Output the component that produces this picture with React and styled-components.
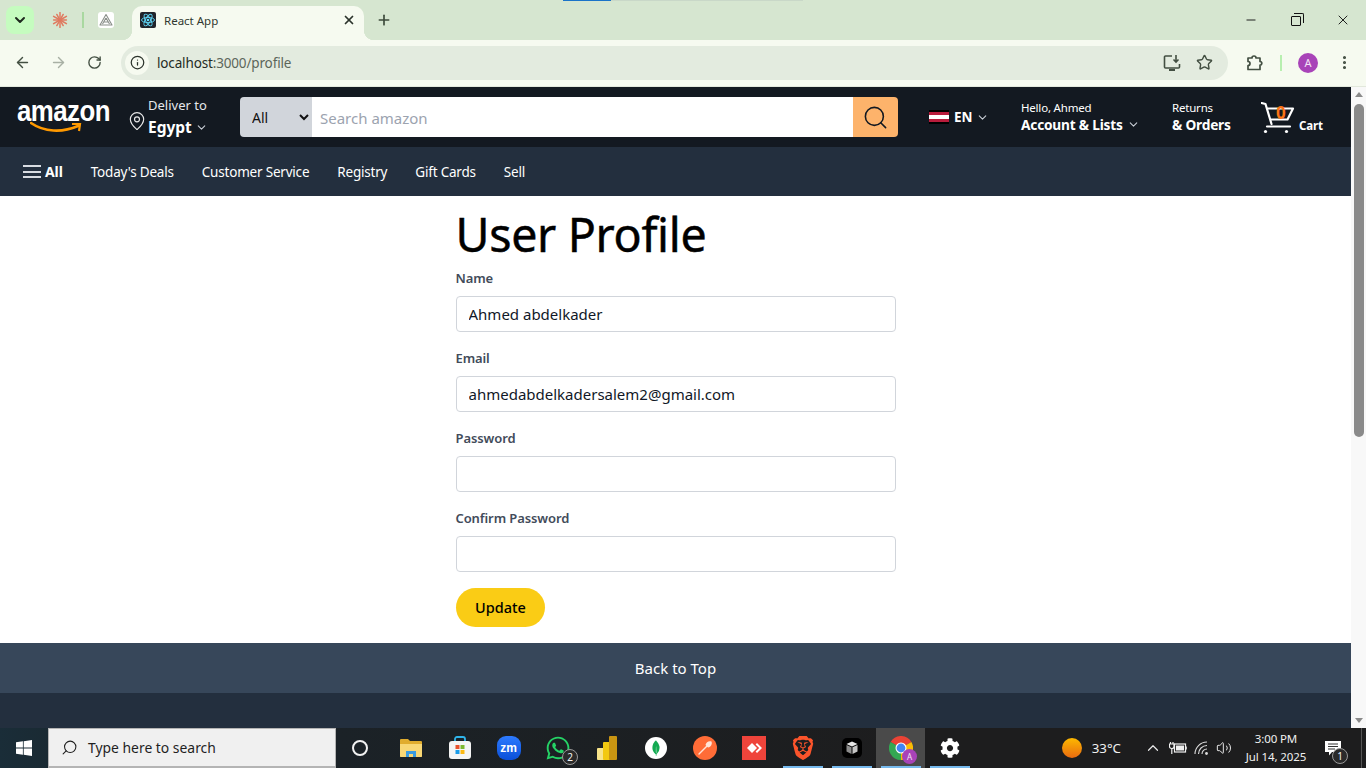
import React from "react";
import styled, { createGlobalStyle } from "styled-components";
import {
  ArrowLeft, ArrowRight, RotateCw, Info, Star, MoreVertical, X, Plus, Minus,
  ChevronDown, ChevronUp, MapPin, Search, Volume2
} from "lucide-react";
import { FaWhatsapp, FaCog } from "react-icons/fa";
import { SiBrave, SiMongodb } from "react-icons/si";

const UI_FONT = `"Noto Sans", "Open Sans", "Liberation Sans", sans-serif`;

const GlobalStyle = createGlobalStyle`
  html, body { margin: 0; padding: 0; height: 100%; overflow: hidden; background: #fff; }
  body { font-family: ${UI_FONT}; }
  #root { height: 768px; }
  * { box-sizing: border-box; }
`;

const Screen = styled.div`
  width: 1366px;
  height: 768px;
  display: flex;
  flex-direction: column;
  overflow: hidden;
`;

/* browser chrome */
const TabStrip = styled.div`
  position: relative;
  height: 40px;
  flex: none;
  background: #d6e6d0;
  display: flex;
  align-items: center;
  padding-left: 6px;
  &::before {
    content: "";
    position: absolute;
    top: 0;
    left: 563px;
    width: 240px;
    height: 1px;
    background: linear-gradient(to right, #1a73c8 20%, #c9d8c8 20%);
  }
`;
const TabMenuButton = styled.div`
  width: 28px;
  height: 28px;
  border-radius: 8px;
  background: #c5fcbf;
  color: #1f2a1f;
  display: flex;
  align-items: center;
  justify-content: center;
`;
const PinnedIcon = styled.div`
  width: 16px;
  height: 16px;
  margin-left: ${({ $ml }) => $ml}px;
  display: flex;
`;
const PinnedDivider = styled.div`
  width: 2px;
  height: 16px;
  margin-left: 14px;
  background: #a9d8a0;
`;
const ActiveTab = styled.div`
  position: relative;
  align-self: flex-end;
  width: 232px;
  height: 34px;
  margin-left: 18px;
  padding: 0 8px 6px;
  background: #f6faf0;
  border-radius: 10px 10px 0 0;
  display: flex;
  align-items: center;
  color: #30382f;
  font-size: 11.5px;
  &::before, &::after {
    content: "";
    position: absolute;
    bottom: 0;
    width: 10px;
    height: 10px;
  }
  &::before { left: -10px; background: radial-gradient(circle at 0 0, #d6e6d0 10px, #f6faf0 10.5px); }
  &::after { right: -10px; background: radial-gradient(circle at 100% 0, #d6e6d0 10px, #f6faf0 10.5px); }
`;
const Favicon = styled.div`
  width: 16px;
  height: 16px;
  border-radius: 2px;
  background: #20232a;
  display: flex;
  margin-right: 8px;
`;
const TabTitle = styled.span`
  flex: 1;
`;
const NewTab = styled.div`
  margin-left: 12px;
  color: #3c4a3a;
  display: flex;
`;
const WindowControls = styled.div`
  margin-left: auto;
  display: flex;
`;
const WindowButton = styled.div`
  width: 46px;
  height: 40px;
  color: #111;
  display: flex;
  align-items: center;
  justify-content: center;
`;
const RestoreGlyph = styled.div`
  position: relative;
  width: 10px;
  height: 10px;
  margin: 2px 0 0 -2px;
  border: 1px solid #111;
  border-radius: 1px;
  &::after {
    content: "";
    position: absolute;
    top: -4px;
    right: -4px;
    width: 9px;
    height: 9px;
    border-top: 1px solid #111;
    border-right: 1px solid #111;
    border-top-right-radius: 2px;
  }
`;
const Toolbar = styled.div`
  height: 47px;
  flex: none;
  background: #f6faf0;
  border-bottom: 1px solid #e2e8dc;
  display: flex;
  align-items: center;
  padding: 0 4px 1px;
`;
const ToolButton = styled.div`
  width: 36px;
  height: 36px;
  color: ${({ $muted }) => ($muted ? "#a8b0a4" : "#434f42")};
  display: flex;
  align-items: center;
  justify-content: center;
`;
const AddressBar = styled.div`
  width: 1107px;
  height: 34px;
  margin: 0 9px;
  border-radius: 17px;
  background: #e3ebdf;
  display: flex;
  align-items: center;
  padding: 0 8px 0 4px;
`;
const SiteInfo = styled.div`
  width: 24px;
  height: 24px;
  border-radius: 50%;
  background: #f6faf0;
  color: #2b332b;
  display: flex;
  align-items: center;
  justify-content: center;
  margin-right: 8px;
`;
const UrlText = styled.div`
  flex: 1;
  font-size: 13.5px;
  letter-spacing: -0.15px;
  color: #5c665a;
  b { font-weight: 400; color: #252b25; }
`;
const AddressAction = styled.div`
  width: 32px;
  height: 32px;
  color: #434f42;
  display: flex;
  align-items: center;
  justify-content: center;
`;
const ToolDivider = styled.div`
  width: 2px;
  height: 16px;
  margin: 0 8px 0 7px;
  background: #b8efb0;
`;
const Avatar = styled.div`
  width: 20px;
  height: 20px;
  border-radius: 50%;
  background: #a843b8;
  color: #f3e3f6;
  font-size: 11px;
  display: flex;
  align-items: center;
  justify-content: center;
`;

/* page viewport */
const Viewport = styled.div`
  flex: 1;
  min-height: 0;
  display: flex;
`;
const Page = styled.div`
  flex: 1;
  min-width: 0;
  display: flex;
  flex-direction: column;
`;
const Scrollbar = styled.div`
  width: 15px;
  background: #f8f8f8;
  display: flex;
  flex-direction: column;
  align-items: center;
  padding: 5px 0;
`;
const ScrollArrow = styled.div`
  width: 0;
  height: 0;
  border-left: 4.5px solid transparent;
  border-right: 4.5px solid transparent;
  border-${({ $down }) => ($down ? "top" : "bottom")}: 5px solid #8a8a8a;
`;
const ScrollTrack = styled.div`
  flex: 1;
  align-self: stretch;
  padding: 7px 2px 0 3px;
`;
const ScrollThumb = styled.div`
  height: 333px;
  background: #8a8a8a;
  border-radius: 5px;
`;

const Header = styled.header`
  height: 60px;
  flex: none;
  background: #131921;
  color: #fff;
  display: flex;
  align-items: center;
  padding-left: 17px;
`;
const Logo = styled.div`
  position: relative;
  width: 94px;
  height: 44px;
`;
const LogoText = styled.span`
  display: block;
  font-family: "Liberation Sans", sans-serif;
  font-weight: 700;
  font-size: 30px;
  letter-spacing: -0.6px;
  line-height: 31px;
  color: #fff;
  transform: scaleX(0.86);
  transform-origin: left center;
`;
const LogoSmile = styled.svg`
  position: absolute;
  left: 13px;
  top: 25px;
`;
const DeliverPin = styled.div`
  margin-left: 16px;
  margin-top: 8px;
  width: 20px;
  display: flex;
  color: #e8e8e8;
`;
const Deliver = styled.div`
  width: 92px;
  margin-left: 1px;
  display: flex;
  flex-direction: column;
  gap: 2px;
`;
const DeliverTop = styled.span`
  font-size: 13px;
  line-height: 19px;
  margin-top: -1px;
  color: #e5e7eb;
`;
const DeliverBottom = styled.span`
  font-size: 15.5px;
  line-height: 21px;
  font-weight: 700;
  display: flex;
  align-items: center;
  gap: 3px;
`;
const SearchForm = styled.div`
  width: 658px;
  height: 40px;
  display: flex;
  border-radius: 4px;
  overflow: hidden;
`;
const CategorySelect = styled.select`
  width: 72px;
  border: 0;
  outline: 0;
  padding-left: 8px;
  background: #d1d5db;
  color: #111;
  font: 400 14px ${UI_FONT};
`;
const SearchInput = styled.input`
  flex: 1;
  min-width: 0;
  border: 0;
  outline: 0;
  padding: 2px 8px 0;
  font: 400 15px ${UI_FONT};
  &::placeholder { color: #9ca3af; opacity: 1; }
`;
const SearchButton = styled.div`
  width: 45px;
  background: #fdb36b;
  color: #131921;
  display: flex;
  align-items: center;
  justify-content: center;
`;
const Language = styled.div`
  margin-left: 31px;
  width: 92px;
  display: flex;
  align-items: center;
  font-size: 13.5px;
  font-weight: 700;
`;
const Flag = styled.div`
  width: 20px;
  height: 14px;
  margin-right: 5px;
  background: linear-gradient(to bottom, #000 0 2px, #b91c3c 2px 5px, #fff 5px 9px, #b91c3c 9px 12px, #000 12px);
`;
const HeaderLink = styled.div`
  width: ${({ $w }) => $w}px;
  margin-top: -2px;
  display: flex;
  flex-direction: column;
`;
const LinkTop = styled.span`
  font-size: 11.5px;
  line-height: 17px;
  letter-spacing: -0.2px;
`;
const LinkBottom = styled.span`
  font-size: 13.7px;
  line-height: 18px;
  font-weight: 700;
  letter-spacing: -0.2px;
  display: flex;
  align-items: center;
  gap: 4px;
  white-space: nowrap;
`;
const CaretIcon = styled(ChevronDown)`
  color: #c9ced6;
  flex: none;
  margin-left: ${({ $ml }) => $ml || 0}px;
`;
const Cart = styled.div`
  position: relative;
  display: flex;
  align-items: flex-end;
  height: 34px;
  margin-top: 2px;
`;
const CartCount = styled.span`
  position: absolute;
  left: 15px;
  top: 3px;
  font-size: 17px;
  line-height: 18px;
  font-weight: 700;
  color: #f97316;
`;
const CartLabel = styled.span`
  font-size: 11.5px;
  line-height: 16px;
  font-weight: 700;
  margin-left: 2px;
  margin-bottom: 1px;
  letter-spacing: -0.1px;
`;

const Nav = styled.nav`
  height: 49px;
  flex: none;
  background: #232f3e;
  color: #fff;
  display: flex;
  align-items: center;
  gap: 28px;
  padding-left: 23px;
  font-size: 13.5px;
`;
const AllButton = styled.div`
  display: flex;
  align-items: center;
  gap: 4px;
  font-weight: 700;
  font-size: 14px;
  letter-spacing: -0.1px;
`;
const Hamburger = styled.div`
  width: 18px;
  height: 13px;
  border-top: 2px solid #d8dce2;
  border-bottom: 2px solid #d8dce2;
  position: relative;
  &::after {
    content: "";
    position: absolute;
    left: 0;
    right: 0;
    top: 3.5px;
    height: 2px;
    background: #d8dce2;
  }
`;
const NavLink = styled.a`
  letter-spacing: -0.2px;
  white-space: nowrap;
`;

const Main = styled.main`
  flex: 1;
  min-height: 0;
  background: #fff;
`;
const ProfileForm = styled.form`
  width: 440px;
  margin: 0 auto;
  padding-top: 10px;
`;
const Title = styled.h1`
  margin: 0 0 6px;
  font-size: 46.5px;
  line-height: 56px;
  font-weight: 400;
  color: #000;
  letter-spacing: -0.3px;
  -webkit-text-stroke: 0.5px #000;
`;
const FieldGroup = styled.div`
  margin-bottom: 16px;
`;
const FieldLabel = styled.label`
  display: block;
  height: 20px;
  margin-bottom: 8px;
  font-size: 13px;
  line-height: 20px;
  font-weight: 600;
  letter-spacing: -0.1px;
  color: #424b5a;
`;
const TextInput = styled.input`
  display: block;
  width: 100%;
  height: 36px;
  padding: 0 12px;
  border: 1px solid #d1d5db;
  border-radius: 4px;
  outline: 0;
  background: #fff;
  color: #111827;
  font: 400 15px ${UI_FONT};
`;
const UpdateButton = styled.button`
  display: block;
  width: 89px;
  height: 39px;
  padding: 0 0 2px 1px;
  border: 0;
  border-radius: 20px;
  background: #facc15;
  color: #000;
  font: 500 14.5px ${UI_FONT};
`;
const BackToTop = styled.div`
  height: 50px;
  flex: none;
  background: #37475a;
  color: #fff;
  font-size: 15px;
  display: flex;
  align-items: center;
  justify-content: center;
`;
const FooterFill = styled.div`
  height: 35px;
  flex: none;
  background: #232f3e;
`;

/* windows taskbar */
const Taskbar = styled.div`
  height: 40px;
  flex: none;
  background: linear-gradient(to right, #1a2d38 0, #1a2a33 48px, #1b2227 340px, #1d1d1e 900px);
  display: flex;
  align-items: center;
  color: #fff;
`;
const StartButton = styled.div`
  width: 48px;
  display: flex;
  justify-content: center;
`;
const TaskSearch = styled.div`
  width: 288px;
  height: 40px;
  background: #f0f0f0;
  border: 1px solid #b4b4b4;
  border-bottom-width: 2px;
  display: flex;
  align-items: center;
  gap: 10px;
  padding-left: 12px;
  color: #1f1f1f;
  font-size: 13.9px;
`;
const MirroredSearch = styled(Search)`
  transform: scaleX(-1);
`;
const TaskIcons = styled.div`
  display: flex;
  height: 40px;
  margin-left: 1px;
`;
const TaskSlot = styled.div`
  position: relative;
  width: 49px;
  height: 40px;
  display: flex;
  align-items: center;
  justify-content: center;
  background: ${({ $active }) => ($active ? "#4a4a4a" : "transparent")};
  ${({ $open }) =>
    $open
      ? `&::after {
    content: "";
    position: absolute;
    left: 5px;
    right: 4px;
    bottom: 0;
    height: 2px;
    background: #76b9ed;
  }`
      : ""}
`;
const CortanaRing = styled.div`
  width: 16px;
  height: 16px;
  margin-right: 3px;
  border-radius: 50%;
  border: 2.5px solid #f2f2f2;
`;
const ZoomTile = styled.div`
  width: 24px;
  height: 24px;
  border-radius: 9px;
  background: linear-gradient(#2d7bff, #0b4fd8);
  color: #fff;
  font: 700 12px "Liberation Sans", sans-serif;
  display: flex;
  align-items: center;
  justify-content: center;
`;
const CountBadge = styled.span`
  position: absolute;
  right: ${({ $r }) => $r}px;
  bottom: ${({ $b }) => $b}px;
  width: 16px;
  height: 16px;
  border-radius: 50%;
  border: 1px solid #9a9a9a;
  background: #2a2a2a;
  color: #f4f4f4;
  font-size: 10px;
  line-height: 14px;
  text-align: center;
`;
const WhatsappIcon = styled(FaWhatsapp)`
  color: #25d366;
`;
const MongoTile = styled.div`
  width: 22px;
  height: 22px;
  border-radius: 50%;
  background: #fff;
  color: #13aa52;
  display: flex;
  align-items: center;
  justify-content: center;
`;
const BraveIcon = styled(SiBrave)`
  color: #fb542b;
`;
const ProfileDot = styled.span`
  position: absolute;
  right: 8px;
  bottom: 4px;
  width: 15px;
  height: 15px;
  border-radius: 50%;
  background: #a843b8;
  color: #f3e3f6;
  font-size: 8px;
  line-height: 15px;
  text-align: center;
`;
const SystemTray = styled.div`
  margin-left: auto;
  display: flex;
  align-items: center;
  height: 40px;
  color: #f0f0f0;
`;
const WeatherSun = styled.div`
  width: 20px;
  height: 20px;
  border-radius: 50%;
  background: linear-gradient(#fdb900, #e86a10);
`;
const Temperature = styled.span`
  margin: 0 20px 0 10px;
  font-size: 13.3px;
`;
const TrayIcon = styled.div`
  width: ${({ $w }) => $w}px;
  display: flex;
  justify-content: center;
  color: #e8e8e8;
`;
const Clock = styled.div`
  width: 76px;
  margin-left: 4px;
  text-align: center;
  font-size: 11.5px;
  line-height: 18px;
  letter-spacing: -0.12px;
`;
const Notify = styled.div`
  position: relative;
  width: 44px;
  height: 40px;
  margin-left: 8px;
  display: flex;
  align-items: center;
  justify-content: center;
  padding-right: 22px;
  &::after {
    content: "";
    position: absolute;
    right: 4px;
    top: 0;
    bottom: 0;
    width: 1px;
    background: #555;
  }
`;

const ReactGlyph = () => (
  <svg width="16" height="16" viewBox="0 0 16 16" fill="none" stroke="#61dafb" strokeWidth="0.9">
    <ellipse cx="8" cy="8" rx="6.5" ry="2.6" />
    <ellipse cx="8" cy="8" rx="6.5" ry="2.6" transform="rotate(60 8 8)" />
    <ellipse cx="8" cy="8" rx="6.5" ry="2.6" transform="rotate(120 8 8)" />
    <circle cx="8" cy="8" r="1.3" fill="#61dafb" stroke="none" />
  </svg>
);

const ClaudeGlyph = () => (
  <svg width="16" height="16" viewBox="0 0 16 16" stroke="#e07a5f" strokeWidth="1.5" strokeLinecap="round">
    {[0, 30, 60, 90, 120, 150, 180, 210, 240, 270, 300, 330].map(a => (
      <line key={a} x1="8" y1="8" x2="8" y2={a % 60 === 0 ? 0.6 : 1.6} transform={`rotate(${a} 8 8)`} />
    ))}
  </svg>
);

const PinnedGlyph = () => (
  <svg width="16" height="16" viewBox="0 0 16 16" fill="none">
    <rect width="16" height="16" rx="3" fill="#fff" />
    <path d="M8 2.5 L14 13 H2 Z M8 6 L11.5 12 M8 6 L4.5 12 M5.5 10 H10.5" stroke="#8a8f8a" strokeWidth="1.1" strokeLinejoin="round" />
  </svg>
);

const InstallIcon = () => (
  <svg width="18" height="18" viewBox="0 0 18 18" fill="none" stroke="currentColor" strokeWidth="1.6">
    <path d="M9 2 H2.5 a1 1 0 0 0-1 1 v10 a1 1 0 0 0 1 1 h13 a1 1 0 0 0 1-1 V10" />
    <path d="M13 1 V8 M10.5 5.5 L13 8 L15.5 5.5" />
    <path d="M6 16 H12" strokeWidth="2" />
  </svg>
);

const ExtensionIcon = () => (
  <svg width="18" height="18" viewBox="0 0 18 18" fill="none" stroke="currentColor" strokeWidth="1.7" strokeLinejoin="round">
    <path d="M2 4 H6 a2 2 0 0 1 4 0 H14 V7.5 a1.8 1.8 0 0 1 0 3.6 V15.5 H2 V11.5 a2 2 0 0 0 0-4 Z" />
  </svg>
);

const WindowsLogo = () => (
  <svg width="16" height="16" viewBox="0 0 16 16" fill="#fff">
    <path d="M0 2.3 L6.9 1.3 V7.6 H0 Z M7.7 1.2 L16 0 V7.6 H7.7 Z M0 8.4 H6.9 V14.7 L0 13.7 Z M7.7 8.4 H16 V16 L7.7 14.8 Z" />
  </svg>
);

const FolderIcon = () => (
  <svg width="22" height="20" viewBox="0 0 22 20">
    <path d="M0 2 a1 1 0 0 1 1-1 h7 l2 2 h11 a1 1 0 0 1 1 1 v14 a1 1 0 0 1-1 1 H1 a1 1 0 0 1-1-1 Z" fill="#e0ac2e" />
    <path d="M0 6 h22 v12 a1 1 0 0 1-1 1 H1 a1 1 0 0 1-1-1 Z" fill="#f8d775" />
    <path d="M6 19 v-6 h10 v6 h-3 v-3 h-4 v3 Z" fill="#3a9be0" />
  </svg>
);

const StoreIcon = () => (
  <svg width="24" height="24" viewBox="0 0 24 24">
    <path d="M7 6 V3 a2 2 0 0 1 2-2 h6 a2 2 0 0 1 2 2 v3" fill="none" stroke="#2fb4ea" strokeWidth="1.8" />
    <rect x="1" y="5" width="22" height="18" rx="3" fill="#f4f4f4" />
    <rect x="7.5" y="9" width="4" height="4" fill="#e8502a" />
    <rect x="12.5" y="9" width="4" height="4" fill="#7cb82f" />
    <rect x="7.5" y="14" width="4" height="4" fill="#1a9be8" />
    <rect x="12.5" y="14" width="4" height="4" fill="#fcb913" />
  </svg>
);

const PowerBiIcon = () => (
  <svg width="20" height="24" viewBox="0 0 20 24">
    <rect x="0" y="12" width="8" height="12" rx="1" fill="#f7e38a" />
    <rect x="6" y="6" width="8" height="18" rx="1" fill="#f2c811" />
    <rect x="12" y="0" width="8" height="24" rx="1" fill="#c99512" />
  </svg>
);

const PostmanIcon = () => (
  <svg width="24" height="24" viewBox="0 0 24 24">
    <circle cx="12" cy="12" r="12" fill="#ff6c37" />
    <path d="M6 18 L15 9" stroke="#ffe4d8" strokeWidth="1.4" strokeLinecap="round" />
    <path d="M12.5 9 C13 6 16 4.5 18.5 5.5 C19.5 8 18 11 15 11.5 Z" fill="#ffe4d8" />
  </svg>
);

const AnydeskIcon = () => (
  <svg width="24" height="24" viewBox="0 0 24 24">
    <rect width="24" height="24" fill="#ef443b" />
    <path d="M10 7 L15 12 L10 17 L5 12 Z" fill="#fff" />
    <path d="M15 7 L20 12 L15 17 L13.6 15.6 L17.2 12 L13.6 8.4 Z" fill="#fff" />
  </svg>
);

const BoxIcon = () => (
  <svg width="20" height="20" viewBox="0 0 20 20">
    <rect width="20" height="20" rx="5" fill="#000" />
    <path d="M10 3.5 L15.5 6 L10 8.5 L4.5 6 Z" fill="#e6e6e6" />
    <path d="M4.5 7 L9.5 9.3 V16 L4.5 13.5 Z" fill="#8c8c8c" />
    <path d="M15.5 7 L10.5 9.3 V16 L15.5 13.5 Z" fill="#c4c4c4" />
  </svg>
);

const ChromeIcon = () => (
  <svg width="24" height="24" viewBox="0 0 24 24">
    <path d="M12 12 L1.6 6 A12 12 0 0 1 22.4 6 Z" fill="#ea4335" />
    <path d="M12 12 L22.4 6 A12 12 0 0 1 12 24 Z" fill="#fbbc04" />
    <path d="M12 12 L12 24 A12 12 0 0 1 1.6 6 Z" fill="#34a853" />
    <circle cx="12" cy="12" r="5.5" fill="#fff" />
    <circle cx="12" cy="12" r="4.4" fill="#4285f4" />
  </svg>
);

const BatteryIcon = () => (
  <svg width="18" height="14" viewBox="0 0 18 14" fill="none" stroke="#f0f0f0" strokeWidth="1.2">
    <rect x="5.5" y="3" width="11" height="8" />
    <rect x="7" y="4.5" width="8" height="5" fill="#f0f0f0" stroke="none" />
    <path d="M17 5.5 V8.5" strokeWidth="1.6" />
    <path d="M1.5 1 V3 M4 1 V3 M0.5 3 H5 V5.5 a2 2 0 0 1-2 2 h-0.5 a2 2 0 0 1-2-2 Z M2.8 7.5 V13" />
  </svg>
);

const WifiFan = () => (
  <svg width="15" height="14" viewBox="0 0 15 14" fill="none" stroke="#dcdcdc" strokeWidth="1.1">
    <path d="M1 13 A12 12 0 0 1 13 1" />
    <path d="M4.5 13 A8.5 8.5 0 0 1 13 4.5" />
    <path d="M8 13 A5 5 0 0 1 13 8" />
    <circle cx="12.5" cy="12.5" r="1.4" fill="#dcdcdc" stroke="none" />
  </svg>
);

const NotifyIcon = () => (
  <svg width="16" height="15" viewBox="0 0 16 15">
    <path d="M0 0 H16 V11 H7 L4 14.5 V11 H0 Z" fill="#fff" />
    <path d="M3 3 H13 M3 5.5 H13 M3 8 H10" stroke="#333" strokeWidth="1" />
  </svg>
);

const CartIcon = () => (
  <svg width="36" height="33" viewBox="0 0 36 33" fill="none" stroke="#fff" strokeWidth="2.2" strokeLinejoin="round" strokeLinecap="round">
    <path d="M0.5 1 L4.5 2 L10.5 22" />
    <path d="M6 24.5 H29" />
    <path d="M7 6.5 H32 L26.5 17.5 H10" />
    <circle cx="4.5" cy="29.5" r="1.6" fill="#fff" stroke="none" />
    <circle cx="25.5" cy="29.5" r="1.6" fill="#fff" stroke="none" />
  </svg>
);

const NAV_LINKS = ["Today's Deals", "Customer Service", "Registry", "Gift Cards", "Sell"];

const FIELDS = [
  { label: "Name", type: "text", value: "Ahmed abdelkader" },
  { label: "Email", type: "email", value: "ahmedabdelkadersalem2@gmail.com" },
  { label: "Password", type: "password", value: "" },
  { label: "Confirm Password", type: "password", value: "" }
];

export default function App() {
  return (
    <Screen>
      <GlobalStyle />
      <TabStrip>
        <TabMenuButton><ChevronDown size={16} strokeWidth={3} /></TabMenuButton>
        <PinnedIcon $ml={18}><ClaudeGlyph /></PinnedIcon>
        <PinnedDivider />
        <PinnedIcon $ml={14}><PinnedGlyph /></PinnedIcon>
        <ActiveTab>
          <Favicon><ReactGlyph /></Favicon>
          <TabTitle>React App</TabTitle>
          <X size={14} strokeWidth={3} color="#2b332b" />
        </ActiveTab>
        <NewTab><Plus size={16} strokeWidth={2.5} /></NewTab>
        <WindowControls>
          <WindowButton><Minus size={14} strokeWidth={1.6} /></WindowButton>
          <WindowButton><RestoreGlyph /></WindowButton>
          <WindowButton><X size={16} strokeWidth={1.4} /></WindowButton>
        </WindowControls>
      </TabStrip>

      <Toolbar>
        <ToolButton><ArrowLeft size={17} strokeWidth={2} /></ToolButton>
        <ToolButton $muted><ArrowRight size={17} strokeWidth={2} /></ToolButton>
        <ToolButton><RotateCw size={15} strokeWidth={2.2} /></ToolButton>
        <AddressBar>
          <SiteInfo><Info size={15} strokeWidth={2} /></SiteInfo>
          <UrlText><b>localhost</b>:3000/profile</UrlText>
          <AddressAction><InstallIcon /></AddressAction>
          <AddressAction><Star size={17} strokeWidth={2} /></AddressAction>
        </AddressBar>
        <ToolButton><ExtensionIcon /></ToolButton>
        <ToolDivider />
        <ToolButton><Avatar>A</Avatar></ToolButton>
        <ToolButton><MoreVertical size={17} strokeWidth={2.4} /></ToolButton>
      </Toolbar>

      <Viewport>
        <Page>
          <Header>
            <Logo>
              <LogoText>amazon</LogoText>
              <LogoSmile width="54" height="16" viewBox="0 0 54 16" fill="none">
                <path d="M1 3 C14 12 32 13 48 6" stroke="#f90" strokeWidth="2.6" strokeLinecap="round" />
                <path d="M42 4 L50 4 L49 11" stroke="#f90" strokeWidth="2.2" />
              </LogoSmile>
            </Logo>
            <DeliverPin><MapPin size={20} strokeWidth={1.4} /></DeliverPin>
            <Deliver>
              <DeliverTop>Deliver to</DeliverTop>
              <DeliverBottom>Egypt <CaretIcon size={13} /></DeliverBottom>
            </Deliver>
            <SearchForm>
              <CategorySelect defaultValue="All"><option>All</option></CategorySelect>
              <SearchInput placeholder="Search amazon" readOnly />
              <SearchButton><Search size={27} strokeWidth={1.4} /></SearchButton>
            </SearchForm>
            <Language>
              <Flag />
              EN
              <CaretIcon size={13} $ml={3} />
            </Language>
            <HeaderLink $w={151}>
              <LinkTop>Hello, Ahmed</LinkTop>
              <LinkBottom>Account &amp; Lists <CaretIcon size={13} /></LinkBottom>
            </HeaderLink>
            <HeaderLink $w={89}>
              <LinkTop>Returns</LinkTop>
              <LinkBottom>&amp; Orders</LinkBottom>
            </HeaderLink>
            <Cart>
              <CartIcon />
              <CartCount>0</CartCount>
              <CartLabel>Cart</CartLabel>
            </Cart>
          </Header>

          <Nav>
            <AllButton><Hamburger />All</AllButton>
            {NAV_LINKS.map(l => <NavLink key={l}>{l}</NavLink>)}
          </Nav>

          <Main>
            <ProfileForm>
              <Title>User Profile</Title>
              {FIELDS.map(f => (
                <FieldGroup key={f.label}>
                  <FieldLabel>{f.label}</FieldLabel>
                  <TextInput type={f.type} defaultValue={f.value} />
                </FieldGroup>
              ))}
              <UpdateButton type="button">Update</UpdateButton>
            </ProfileForm>
          </Main>

          <BackToTop>Back to Top</BackToTop>
          <FooterFill />
        </Page>
        <Scrollbar>
          <ScrollArrow />
          <ScrollTrack><ScrollThumb /></ScrollTrack>
          <ScrollArrow $down />
        </Scrollbar>
      </Viewport>

      <Taskbar>
        <StartButton><WindowsLogo /></StartButton>
        <TaskSearch>
          <MirroredSearch size={17} strokeWidth={1.5} />
          Type here to search
        </TaskSearch>
        <TaskIcons>
          <TaskSlot><CortanaRing /></TaskSlot>
          <TaskSlot><FolderIcon /></TaskSlot>
          <TaskSlot><StoreIcon /></TaskSlot>
          <TaskSlot><ZoomTile>zm</ZoomTile></TaskSlot>
          <TaskSlot>
            <WhatsappIcon size={26} />
            <CountBadge $r={4} $b={3}>2</CountBadge>
          </TaskSlot>
          <TaskSlot><PowerBiIcon /></TaskSlot>
          <TaskSlot><MongoTile><SiMongodb size={16} /></MongoTile></TaskSlot>
          <TaskSlot><PostmanIcon /></TaskSlot>
          <TaskSlot><AnydeskIcon /></TaskSlot>
          <TaskSlot $open><BraveIcon size={24} /></TaskSlot>
          <TaskSlot $open><BoxIcon /></TaskSlot>
          <TaskSlot $active $open><ChromeIcon /><ProfileDot>A</ProfileDot></TaskSlot>
          <TaskSlot $open><FaCog size={20} /></TaskSlot>
        </TaskIcons>
        <SystemTray>
          <WeatherSun />
          <Temperature>33°C</Temperature>
          <TrayIcon $w={24}><ChevronUp size={18} strokeWidth={1.6} /></TrayIcon>
          <TrayIcon $w={25}><BatteryIcon /></TrayIcon>
          <TrayIcon $w={23}><WifiFan /></TrayIcon>
          <TrayIcon $w={21}><Volume2 size={16} strokeWidth={1.5} /></TrayIcon>
          <Clock>3:00 PM<br />Jul 14, 2025</Clock>
          <Notify>
            <NotifyIcon />
            <CountBadge $r={18} $b={4}>1</CountBadge>
          </Notify>
        </SystemTray>
      </Taskbar>
    </Screen>
  );
}
